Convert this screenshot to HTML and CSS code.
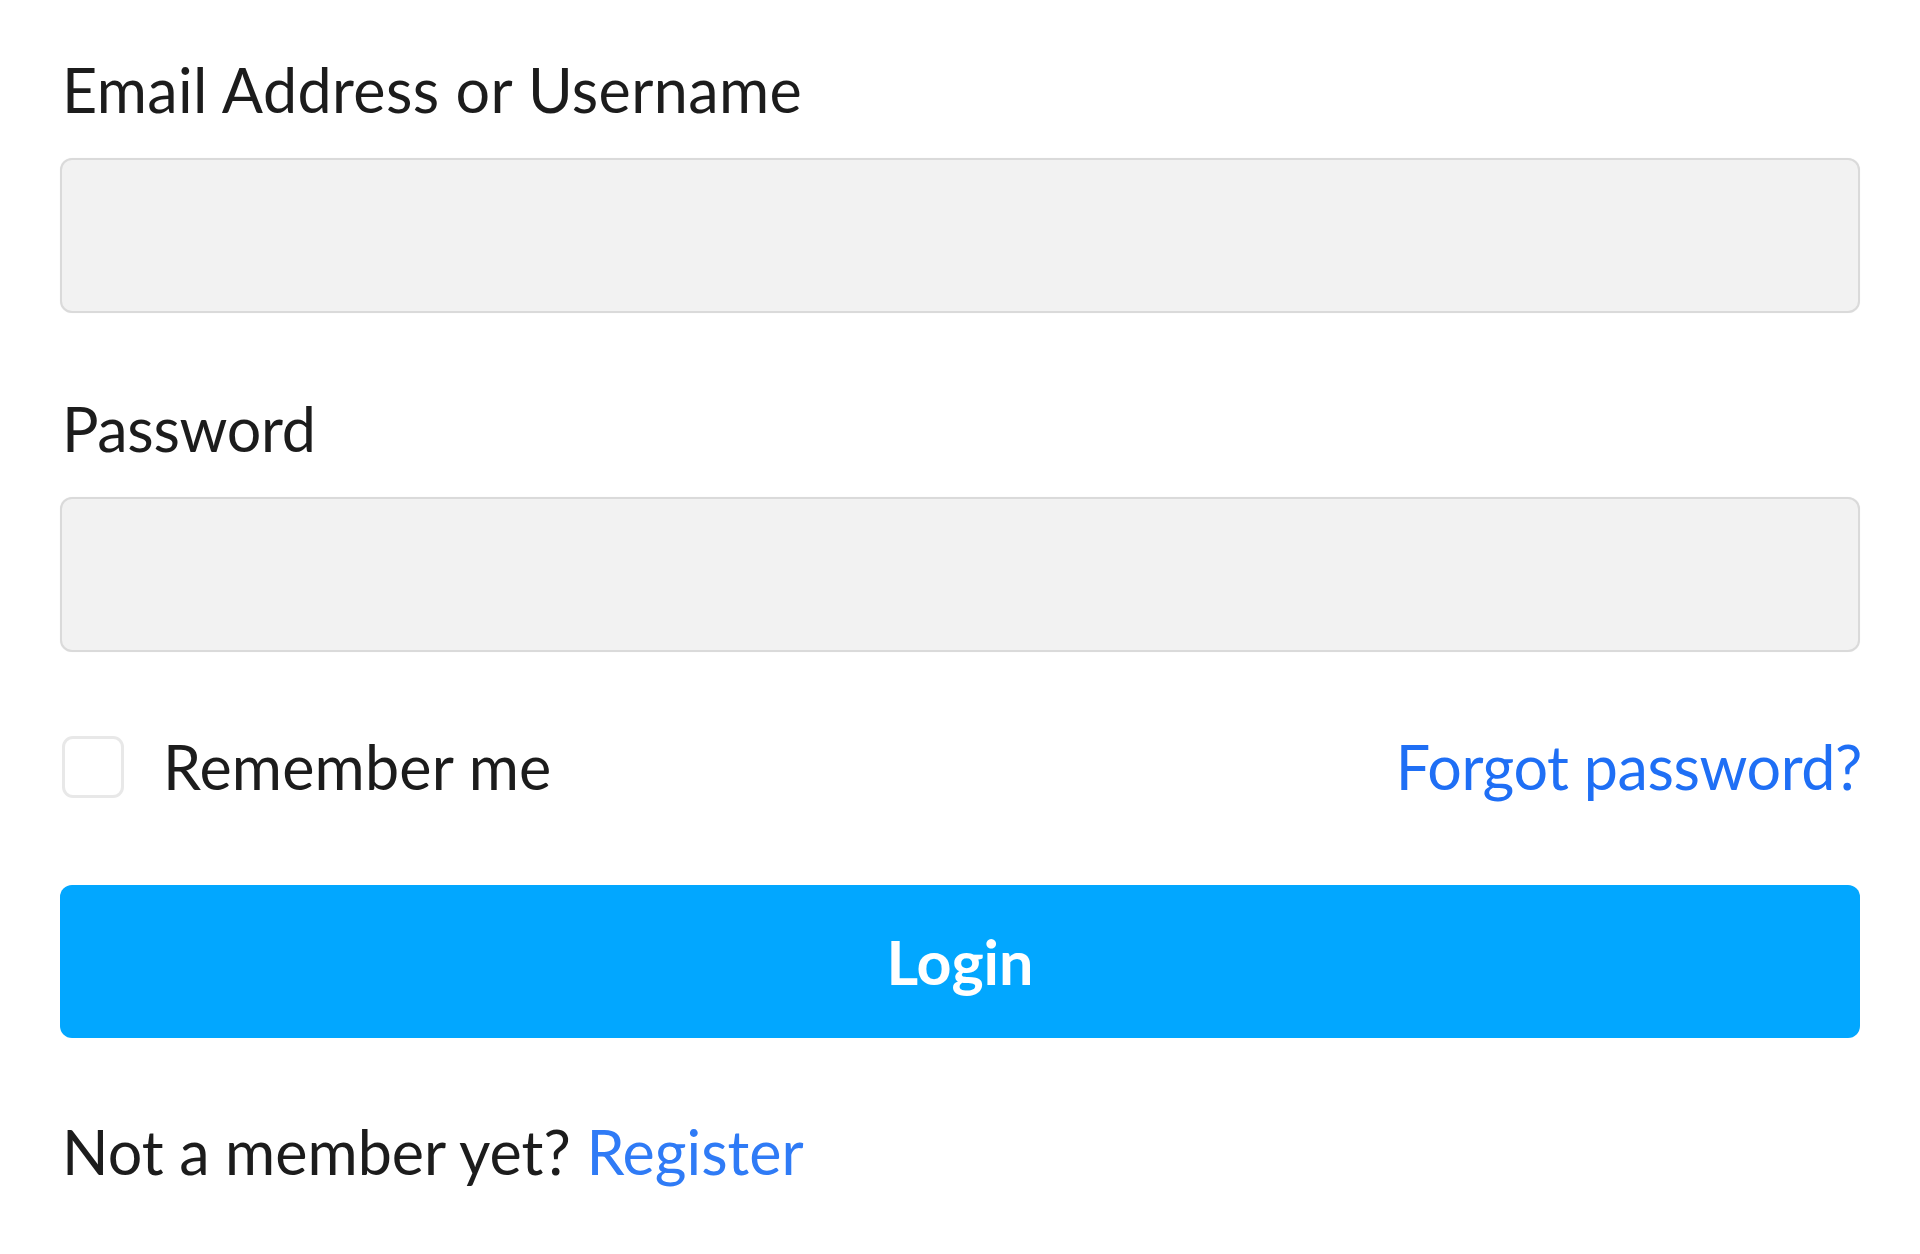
FILE: index.html
```html
<!DOCTYPE html>
<html lang="en">
<head>
<meta charset="utf-8">
<title>Login</title>
<link rel="stylesheet" href="styles.css">
</head>
<body>
<form class="login-form">
  <label class="field-label" for="user">Email Address or Username</label>
  <input class="text-input" id="user" type="text">
  <label class="field-label field-label--second" for="pass">Password</label>
  <input class="text-input" id="pass" type="password">
  <div class="options-row">
    <label class="remember">
      <span class="checkbox"></span>
      <span class="remember-text">Remember me</span>
    </label>
    <a class="link forgot" href="#">Forgot password?</a>
  </div>
  <button class="login-btn" type="button">Login</button>
  <p class="register-line">Not a member yet? <a class="link register" href="#">Register</a></p>
</form>
</body>
</html>
```

FILE: styles.css
```css
* { box-sizing: border-box; }

html, body {
  margin: 0;
  padding: 0;
  background: #ffffff;
}

body {
  font-family: "Lato", "Noto Sans", sans-serif;
  font-size: 61px;
  line-height: 73px;
  color: #1c1c1c;
}

.login-form {
  display: flex;
  flex-direction: column;
  padding: 53px 60px 0 60px;
  width: 1920px;
}

.field-label {
  display: block;
  padding-left: 2px;
  height: 73px;
  margin-bottom: 32px;
  letter-spacing: 0.4px;
}

.field-label--second {
  margin-top: 79px;
  letter-spacing: -0.3px;
}

.text-input {
  display: block;
  width: 100%;
  height: 155px;
  background: #f2f2f2;
  border: 2px solid #dadada;
  border-radius: 12px;
  box-shadow: 0 0 1px rgba(0, 0, 0, 0.08);
  outline: none;
  font: inherit;
  padding: 0 30px;
}

.options-row {
  display: flex;
  align-items: center;
  justify-content: space-between;
  margin-top: 78px;
  height: 73px;
}

.remember {
  display: flex;
  align-items: center;
  gap: 39px;
  padding-left: 2px;
}

.remember-text {
  letter-spacing: 0.2px;
}

.checkbox {
  display: block;
  width: 62px;
  height: 62px;
  border: 3px solid #e8e8e8;
  border-radius: 11px;
  background: #ffffff;
}

.link {
  color: #1f6ff5;
  text-decoration: none;
}

.forgot {
  letter-spacing: -0.4px;
  margin-right: -2px;
}

.login-btn {
  display: block;
  width: 100%;
  height: 153px;
  margin-top: 82px;
  border: none;
  border-radius: 12px;
  background: #02a7ff;
  color: #ffffff;
  font-family: inherit;
  font-size: 61px;
  font-weight: 700;
  line-height: 73px;
  padding: 0;
}

.register-line {
  margin: 77px 0 0 0;
  padding-left: 2px;
}

.register {
  color: #2f7bf6;
}
```
